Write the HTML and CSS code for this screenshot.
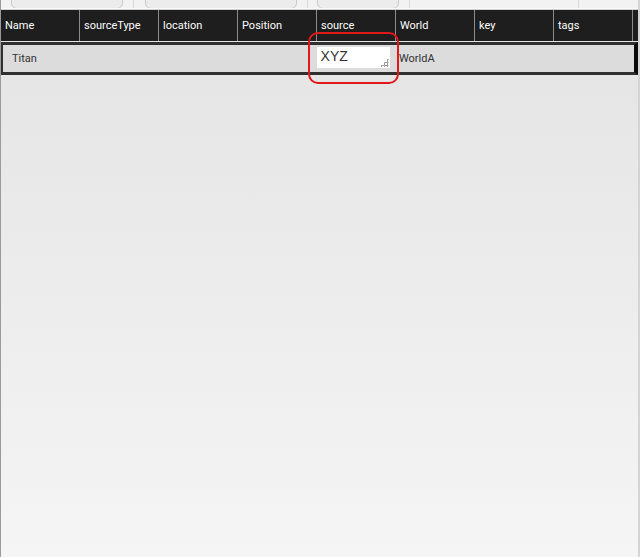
FILE: index.html
```html
<!DOCTYPE html>
<html>
<head>
  <meta charset="utf-8">
  <title>Grid</title>
  <link rel="stylesheet" href="styles.css">
</head>
<body>
  <div class="toolbar">
    <span class="tool-btn btn-a"></span>
    <span class="tool-sep"></span>
    <span class="tool-btn btn-b"></span>
    <span class="tool-sep"></span>
    <span class="tool-btn btn-c"></span>
    <span class="tool-sep"></span>
    <span class="tool-gap"></span>
    <span class="tool-sep"></span>
  </div>

  <div class="grid">
    <div class="grid-header">
      <div class="cell">Name</div>
      <div class="cell">sourceType</div>
      <div class="cell">location</div>
      <div class="cell">Position</div>
      <div class="cell">source</div>
      <div class="cell">World</div>
      <div class="cell">key</div>
      <div class="cell">tags</div>
    </div>

    <div class="grid-row">
      <div class="cell first">Titan</div>
      <div class="cell"></div>
      <div class="cell"></div>
      <div class="cell"></div>
      <div class="cell edit">
        <div class="source-box">
          <textarea class="source-input">XYZ</textarea>
          <span class="grip"></span>
        </div>
        <span class="highlight"></span>
      </div>
      <div class="cell">WorldA</div>
      <div class="cell"></div>
      <div class="cell"></div>
    </div>
  </div>
</body>
</html>
```

FILE: styles.css
```css
html, body {
  height: 100%;
}

body {
  margin: 0;
  font-family: Roboto, "Liberation Sans", Arial, sans-serif;
  font-size: 11px;
  color: #222;
  background: linear-gradient(#e3e3e3, #f5f5f5);
  border-left: 1px solid #9a9a9a;
  border-right: 2px solid #d4d4d4;
  box-sizing: border-box;
  overflow: hidden;
}

/* toolbar, only its bottom edge shows */
.toolbar {
  display: flex;
  height: 8px;
  overflow: hidden;
  background: #f2f2f2;
  border-bottom: 1px solid #fafafa;
}

.tool-btn {
  display: block;
  height: 20px;
  margin-top: -13px;
  border: 1px solid #c8c8c8;
  border-radius: 6px;
  background: #ececec;
}

.btn-a { width: 110px; margin-left: 10px; margin-right: 10px; }
.btn-b { width: 150px; margin-left: 11px; margin-right: 10px; }
.btn-c { width: 80px; margin-left: 9px; margin-right: 10px; }
.tool-gap { width: 168px; }

.tool-sep {
  width: 1px;
  background: #d6d6d6;
}

.grid {
  width: 637px;
}

.grid-header {
  display: flex;
  height: 31px;
  background: #1e1e1e;
  padding-right: 4px;
  border-top: 1px solid #d0d0d0;
}

.grid-header .cell {
  width: 74px;
  padding-left: 4px;
  border-right: 1px solid #8c8c8c;
  color: #fff;
  line-height: 31px;
}

.grid-row {
  display: flex;
  margin-top: 1px;
  width: 631px;
  height: 27px;
  background: #dcdcdc;
  border-top: 3px solid #303030;
  border-bottom: 3px solid #303030;
  border-left: 2px solid #303030;
  border-right: 4px solid #0a0a0a;
}

.grid-row .cell {
  width: 79px;
  line-height: 27px;
  color: #333;
}

.grid-row .cell.first {
  width: 68px;
  padding-left: 9px;
}

.grid-row .cell.edit {
  position: relative;
  width: 85px;
}

.source-box {
  position: relative;
  width: 73px;
  margin: 2px 0 0 2px;
}

.source-input {
  display: block;
  width: 73px;
  height: 21px;
  margin: 0;
  padding: 0 4px;
  border: none;
  background: #fff;
  font-family: "Liberation Sans", Arial, sans-serif;
  font-size: 14px;
  line-height: 19px;
  color: #333;
  resize: none;
  outline: none;
  overflow: hidden;
  box-sizing: border-box;
}

.grip {
  position: absolute;
  right: 1px;
  bottom: 1px;
  width: 9px;
  height: 9px;
  background:
    radial-gradient(circle, #a0a0a0 1px, transparent 1.1px) 0 0 / 3px 3px;
  clip-path: polygon(100% 0, 100% 100%, 0 100%);
}

.highlight {
  position: absolute;
  left: -7px;
  top: -13px;
  width: 87px;
  height: 48px;
  border: 2px solid #e01818;
  border-radius: 10px;
  pointer-events: none;
}
```
